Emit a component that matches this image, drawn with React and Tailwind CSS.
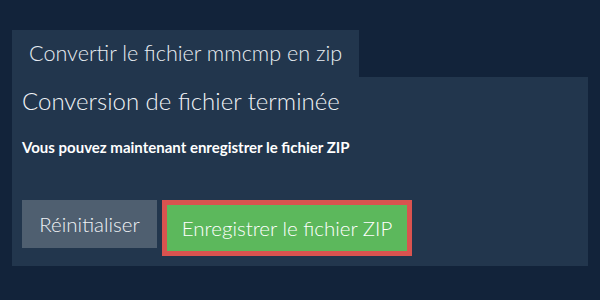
import React from 'react';

const App = () => {
  return (
    <div
      className="w-[600px] h-[300px] bg-[#12233a] pt-[30px] px-3 text-white"
      style={{ fontFamily: 'Lato, "Noto Sans", sans-serif' }}
    >
      {/* tab */}
      <div className="inline-flex items-center h-[47px] px-[17px] bg-[#22364d] text-[21.6px] leading-[1.2] font-light text-[#e8edf2]">
        Convertir le fichier mmcmp en zip
      </div>

      <div className="bg-[#22364d] h-[189px] px-[10px] pt-[10px]">
        <h2 className="text-[24px] leading-[1.2] font-light text-[#f0f3f6]">
          Conversion de fichier terminée
        </h2>
        <p className="mt-[22px] text-[15px] leading-[18px] font-bold text-white">
          Vous pouvez maintenant enregistrer le fichier ZIP
        </p>

        <div className="mt-[44px] flex items-start gap-[5px]">
          <button className="h-[48px] w-[135px] bg-[#4f5f70] text-[20.5px] leading-[1.2] font-light text-[#eef1f4]">
            Réinitialiser
          </button>
          <div className="border-[5px] border-[#d9534f]">
            <button className="h-[46px] w-[240px] bg-[#5cb85c] text-[20.5px] leading-[1.2] font-light text-white">
              Enregistrer le fichier ZIP
            </button>
          </div>
        </div>
      </div>
    </div>
  );
};

export default App;
